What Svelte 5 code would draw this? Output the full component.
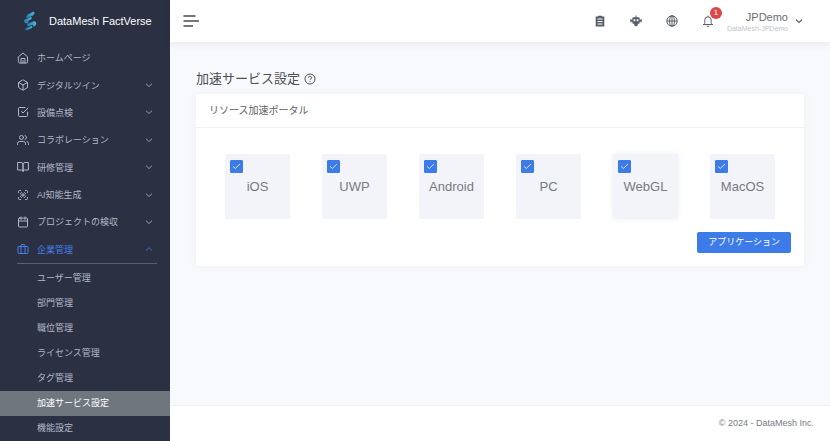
<script>
  const menu = [
    { icon: 'home', label: 'ホームページ', leaf: true },
    { icon: 'box', label: 'デジタルツイン' },
    { icon: 'check', label: '設備点検' },
    { icon: 'users', label: 'コラボレーション' },
    { icon: 'book', label: '研修管理' },
    { icon: 'ai', label: 'AI知能生成' },
    { icon: 'calendar', label: 'プロジェクトの検収' },
    { icon: 'case', label: '企業管理', open: true }
  ];
  const submenu = ['ユーザー管理', '部門管理', '職位管理', 'ライセンス管理', 'タグ管理', '加速サービス設定', '機能設定'];
  const current = '加速サービス設定';
  let platforms = $state([
    { name: 'iOS', on: true },
    { name: 'UWP', on: true },
    { name: 'Android', on: true },
    { name: 'PC', on: true },
    { name: 'WebGL', on: true, raised: true },
    { name: 'MacOS', on: true }
  ]);
</script>

{#snippet icon(name)}
  <svg class="icon" viewBox="0 0 24 24" aria-hidden="true">
    {#if name === 'home'}
      <path d="M3 9.500 12 2l9 7.500V20a2 2 0 0 1-2 2H5a2 2 0 0 1-2-2zM8 22v-9h8v9M12 22v-5" />
    {:else if name === 'box'}
      <path d="M21 16V8a2 2 0 0 0-1-1.730l-7-4a2 2 0 0 0-2 0l-7 4A2 2 0 0 0 3 8v8a2 2 0 0 0 1 1.730l7 4a2 2 0 0 0 2 0l7-4A2 2 0 0 0 21 16zM3.300 7 12 12l8.700-5M12 22V12" />
    {:else if name === 'check'}
      <path d="m9 11 3 3L22 4M21 12v7a2 2 0 0 1-2 2H5a2 2 0 0 1-2-2V5a2 2 0 0 1 2-2h11" />
    {:else if name === 'users'}
      <path d="M17 21v-2a4 4 0 0 0-4-4H5a4 4 0 0 0-4 4v2M23 21v-2a4 4 0 0 0-3-3.870M16 3.130a4 4 0 0 1 0 7.750" />
      <circle cx="9" cy="7" r="4" />
    {:else if name === 'book'}
      <path d="M2 3h6a4 4 0 0 1 4 4v14a3 3 0 0 0-3-3H2zM22 3h-6a4 4 0 0 0-4 4v14a3 3 0 0 1 3-3h7z" />
    {:else if name === 'ai'}
      <path d="M3 7V5a2 2 0 0 1 2-2h2M17 3h2a2 2 0 0 1 2 2v2M21 17v2a2 2 0 0 1-2 2h-2M7 21H5a2 2 0 0 1-2-2v-2M9 7l-2 2M15 7l2 2M9 17l-2-2M15 17l2-2" />
      <path d="M8 12h8M12 9v6" />
    {:else if name === 'calendar'}
      <rect x="3" y="4" width="18" height="18" rx="2" />
      <path d="M16 2v5M8 2v5M3 10h18" />
    {:else if name === 'case'}
      <rect x="2" y="7" width="20" height="14" rx="2" />
      <path d="M16 21V5a2 2 0 0 0-2-2h-4a2 2 0 0 0-2 2v16" />
    {/if}
  </svg>
{/snippet}

{#snippet chevron(up)}
  <svg class="chevron" viewBox="0 0 10 10" aria-hidden="true">
    <path d={up ? 'M2 6.500 5 3.700l3 2.800' : 'M2 3.700 5 6.500l3-2.800'} />
  </svg>
{/snippet}

<div class="app">
  <aside>
    <a class="brand" href="#home">
      <svg viewBox="0 0 16 20" aria-hidden="true">
        <defs>
          <linearGradient id="wave" x1="0" y1="0" x2="1" y2="0">
            <stop offset="0" stop-color="#2377ac" />
            <stop offset="1" stop-color="#45b8dc" />
          </linearGradient>
        </defs>
        <path fill="url(#wave)" d="M5.500 3.500 11 .8Q12.500.5 12.300 2.200 12 3.800 11 4.500L5.500 7Q4 7 4.200 5.500z" />
        <path fill="url(#wave)" d="M2.500 8.500 9 6Q10.200 6.500 9.500 8L6.500 9.800Q5.500 10.500 6.500 11.500L5 12.500Q1.800 11.800 1.800 10z" />
        <path fill="url(#wave)" d="M5 13 12 10Q14.500 10.500 14.300 12.500 14 14.500 12.500 15.300L11 15.800Q12 14 10.500 13.800L6.500 15.200Q4.500 15 5 13z" />
        <path fill="url(#wave)" d="M3.500 17.500 10 14.800Q11 15.500 9.800 17L5 19.300Q3 19.500 3.500 17.500z" />
      </svg>
      <span>DataMesh FactVerse</span>
    </a>
    <nav>
      <ul class="menu">
        {#each menu as item}
          <li>
            {#if item.leaf}
              <a class="entry" href="#home">{@render icon(item.icon)}<span>{item.label}</span></a>
            {:else}
              <button class="entry" class:open={item.open} type="button" aria-expanded={!!item.open}>
                {@render icon(item.icon)}<span>{item.label}</span>{@render chevron(item.open)}
              </button>
            {/if}
          </li>
        {/each}
      </ul>
      <ul class="submenu">
        {#each submenu as label}
          <li><a href="#settings" class:current={label === current}>{label}</a></li>
        {/each}
      </ul>
    </nav>
  </aside>

  <div class="page">
    <header>
      <button class="plain toggle" type="button" aria-label="メニュー">
        <svg viewBox="0 0 16 12"><path d="M.5 1H12.500M.5 6H16M.5 11H10" /></svg>
      </button>
      <div class="tools">
        <button class="plain" type="button" aria-label="タスク">
          <svg class="solid" viewBox="0 0 12 12">
            <path fill-rule="evenodd" d="M4 1.500V.8h4v.7h2.300v10H1.700v-10zM3.500 3.500v1h5v-1zM3.500 6v1h5V6zM3.500 8.500v1h5v-1z" />
          </svg>
        </button>
        <button class="plain" type="button" aria-label="ロボット">
          <svg class="solid" viewBox="0 0 12 12">
            <path fill-rule="evenodd" d="M5.500.5h1v1.700h2Q9.700 2.200 9.700 3.500v1.300h1V4h1v3.500h-1v-.9h-1V7.500Q9.700 8.700 8.500 8.700H7.800v1.500L6 11.500 4.200 10.200V8.700h-.7Q2.300 8.700 2.300 7.500v-.9h-1v.9h-1V4h1v.8h1V3.500Q2.300 2.200 3.500 2.200h2zM3.600 4.300v1.900h1.700V4.300zM6.700 4.300v1.900h1.700V4.300z" />
          </svg>
        </button>
        <button class="plain" type="button" aria-label="言語">
          <svg viewBox="0 0 12 12">
            <circle cx="6" cy="6" r="5.200" /><ellipse cx="6" cy="6" rx="2.400" ry="5.200" /><path d="M1 6h10M6 1v10" />
          </svg>
        </button>
        <button class="plain bell" type="button" aria-label="通知">
          <svg viewBox="0 0 12 12">
            <path d="M1 9.500h10M2.200 9.500C3 8.500 2.700 7 2.800 5a3.200 3.200 0 0 1 6.400 0c.1 2-.2 3.500.6 4.500M6 .6v1.200M4.800 11.300h2.400" />
          </svg>
          <span class="badge">1</span>
        </button>
        <button class="plain account" type="button">
          <span class="who"><span>JPDemo</span><small>DataMesh-JPDemo</small></span>
          {@render chevron(false)}
        </button>
      </div>
    </header>

    <main>
      <h1>
        加速サービス設定
        <svg viewBox="0 0 12 12" aria-hidden="true">
          <circle cx="6" cy="6" r="5" />
          <path d="M4.500 4.800a1.500 1.500 0 1 1 2.300 1.200q-.8.400-.8 1.100M6 8.200v.9" />
        </svg>
      </h1>
      <section class="card">
        <h2>リソース加速ポータル</h2>
        <form>
          <div class="tiles">
            {#each platforms as platform}
              <label class="tile" class:raised={platform.raised}>
                <span class="box">
                  <input type="checkbox" bind:checked={platform.on} />
                  {#if platform.on}
                    <svg viewBox="0 0 13 13" aria-hidden="true"><path d="M3 6.300 5.300 8.500 10 4" /></svg>
                  {/if}
                </span>
                <span class="name">{platform.name}</span>
              </label>
            {/each}
          </div>
          <button class="apply" type="button">アプリケーション</button>
        </form>
      </section>
    </main>

    <footer>© 2024 - DataMesh Inc.</footer>
  </div>
</div>

<style>
  :global(body) {
    margin: 0;
    background: #f8f9fc;
  }
  .app {
    display: flex;
    min-height: 100vh;
    font-family: 'Liberation Sans', 'Noto Sans CJK JP', sans-serif;
    font-size: 9px;
    color: #5c6167;
  }
  .app * {
    box-sizing: border-box;
  }
  svg {
    display: block;
    flex: none;
    fill: none;
    stroke: currentColor;
  }
  button {
    font: inherit;
    color: inherit;
    cursor: pointer;
  }
  a {
    color: inherit;
    text-decoration: none;
  }
  ul {
    list-style: none;
    margin: 0;
    padding: 0;
  }

  aside {
    flex: 0 0 170px;
    background: #2b3043;
    color: #b3b8c6;
  }
  .brand {
    display: flex;
    align-items: center;
    gap: 11px;
    height: 44px;
    padding: 0 0 2px 22px;
    color: #fff;
    font-size: 11px;
    white-space: nowrap;
  }
  .brand svg {
    width: 16px;
    height: 20px;
    stroke: none;
  }
  .menu {
    display: grid;
    grid-auto-rows: 1fr;
    min-height: 220px;
    margin: 0 13px 0 17px;
    border-bottom: 1px solid #596072;
  }
  .menu li {
    display: flex;
  }
  .entry {
    display: flex;
    flex: 1;
    align-items: center;
    gap: 8px;
    padding: 0 3px 0 0;
    border: 0;
    background: none;
    text-align: left;
    white-space: nowrap;
  }
  .entry span {
    flex: 1;
  }
  .entry.open {
    color: #467fe6;
  }
  .icon {
    width: 12px;
    height: 12px;
    stroke-width: 2;
    stroke-linecap: round;
    stroke-linejoin: round;
  }
  .chevron {
    width: 10px;
    height: 10px;
    opacity: 0.8;
  }
  .submenu {
    padding-top: 2px;
  }
  .submenu a {
    display: block;
    padding-left: 37px;
    line-height: 25px;
  }
  .submenu .current {
    background: #70767d;
    color: #fff;
  }

  .page {
    display: flex;
    flex: 1;
    flex-direction: column;
    min-width: 0;
  }
  header {
    display: flex;
    align-items: center;
    justify-content: space-between;
    height: 42px;
    padding: 0 26px 0 13px;
    background: #fff;
    box-shadow: 0 1px 8px rgba(40, 50, 80, 0.1);
  }
  .plain {
    display: flex;
    padding: 0;
    border: 0;
    background: none;
    color: #565f69;
  }
  .toggle svg {
    width: 16px;
    height: 12px;
    stroke-width: 2;
    color: #777;
  }
  .tools {
    display: flex;
    align-items: center;
    gap: 24px;
  }
  .tools > .plain > svg:not(.chevron) {
    width: 12px;
    height: 12px;
  }
  .tools .solid {
    fill: currentColor;
    stroke: none;
  }
  .bell {
    position: relative;
  }
  .badge {
    position: absolute;
    left: 8px;
    top: -8px;
    width: 12px;
    border-radius: 50%;
    background: #dc4646;
    color: #fff;
    font-size: 8px;
    line-height: 12px;
    text-align: center;
  }
  .account {
    align-items: center;
    gap: 6px;
    margin-left: -11px;
  }
  .account .chevron {
    stroke-width: 1.2;
    opacity: 1;
  }
  .who {
    display: flex;
    flex-direction: column;
    align-items: flex-end;
    padding-top: 2px;
    font-size: 11px;
    line-height: 13px;
    color: #686d73;
  }
  .who small {
    font-size: 7px;
    line-height: 9px;
    color: #c2c5ca;
  }

  main {
    flex: 1;
    padding: 27px 26px;
  }
  h1 {
    display: flex;
    align-items: center;
    gap: 4px;
    margin: 0 0 5px;
    font-size: 13px;
    font-weight: 400;
    line-height: 20px;
    color: #4b4f56;
  }
  h1 svg {
    width: 12px;
    height: 12px;
  }
  .card {
    background: #fff;
    border-radius: 2px;
    box-shadow: 0 0 8px rgba(40, 50, 80, 0.05);
  }
  h2 {
    margin: 0;
    padding: 0 13px;
    border-bottom: 1px solid #f1f2f5;
    font-size: 10px;
    font-weight: 400;
    line-height: 33px;
  }
  form {
    display: flex;
    flex-direction: column;
    padding: 26px 13px 13px;
  }
  .tiles {
    display: flex;
    justify-content: space-between;
    padding: 0 16px;
  }
  .tile {
    display: flex;
    flex: 0 0 65px;
    flex-direction: column;
    gap: 5px;
    min-height: 65px;
    padding-top: 6px;
    border-radius: 2px;
    background: #f2f4f9;
    color: #777b80;
    font-size: 13px;
    line-height: 18px;
    cursor: pointer;
  }
  .raised {
    box-shadow: 0 0 5px rgba(60, 80, 130, 0.1);
  }
  .box {
    position: relative;
    width: 13px;
    height: 13px;
    margin-left: 5px;
  }
  .box input {
    display: block;
    width: 13px;
    height: 13px;
    margin: 0;
    appearance: none;
    border: 1px solid #3c7be8;
    border-radius: 1px;
    background: #fff;
  }
  .box input:checked {
    background: #3c7be8;
  }
  .box svg {
    position: absolute;
    inset: 0;
    color: #d5e4ff;
    pointer-events: none;
  }
  .name {
    text-align: center;
  }
  .apply {
    align-self: flex-end;
    margin-top: 13px;
    padding: 0 11px;
    border: 0;
    border-radius: 2px;
    background: #3c7be8;
    color: #fff;
    line-height: 21px;
  }
  footer {
    padding: 0 16px;
    border-top: 1px solid #eef0f4;
    background: #fff;
    line-height: 35px;
    text-align: right;
    color: #777b82;
  }
</style>
